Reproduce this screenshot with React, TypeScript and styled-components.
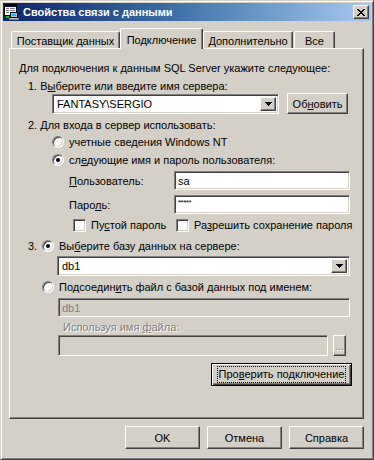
import React from 'react';
import styled, { createGlobalStyle, css } from 'styled-components';

//----------------------------------------- Global -----------------------------------------//
const GlobalStyle = createGlobalStyle`
  html, body { margin: 0; padding: 0; background: #d4d0c8; }
  * { box-sizing: border-box; }
`;

//----------------------------------------- Bevels -----------------------------------------//
const raised = css`
  border: 1px solid;
  border-color: #ffffff #404040 #404040 #ffffff;
  box-shadow: inset -1px -1px #808080, inset 1px 1px #d4d0c8;
`;

const sunken = css`
  border: 1px solid;
  border-color: #808080 #ffffff #ffffff #808080;
  box-shadow: inset 1px 1px #404040, inset -1px -1px #d4d0c8;
`;

//----------------------------------------- Icons -----------------------------------------//
const DataLinkIcon = () => (
  <svg width="16" height="16" viewBox="0 0 16 16" shapeRendering="crispEdges">
    <rect x="0.5" y="0.5" width="12" height="11" fill="#ffffff" stroke="#000000" />
    <rect x="1" y="1" width="11" height="2" fill="#000080" />
    <rect x="2" y="4" width="3" height="1" fill="#808080" />
    <rect x="6" y="4" width="5" height="1" fill="#808080" />
    <rect x="2" y="6" width="3" height="1" fill="#808080" />
    <rect x="6" y="6" width="5" height="1" fill="#808080" />
    <rect x="2" y="8" width="3" height="1" fill="#808080" />
    <rect x="6.5" y="8.5" width="7" height="5" fill="#c0c0c0" stroke="#000000" />
    <rect x="8" y="10" width="4" height="2" fill="#00c0ff" />
    <rect x="5" y="14" width="10" height="2" fill="#808080" />
    <rect x="6" y="14" width="8" height="1" fill="#c0c0c0" />
    <rect x="2" y="12" width="3" height="2" fill="#00c000" />
  </svg>
);

const xPixels = [
  [0, 0], [1, 0], [6, 0], [7, 0],
  [1, 1], [2, 1], [5, 1], [6, 1],
  [2, 2], [3, 2], [4, 2], [5, 2],
  [3, 3], [4, 3],
  [2, 4], [3, 4], [4, 4], [5, 4],
  [1, 5], [2, 5], [5, 5], [6, 5],
  [0, 6], [1, 6], [6, 6], [7, 6],
];

const CloseGlyph = () => (
  <svg width="8" height="7" viewBox="0 0 8 7" shapeRendering="crispEdges">
    {xPixels.map(([x, y]) => <rect key={`${x}-${y}`} x={x} y={y} width="1" height="1" fill="#000" />)}
  </svg>
);

const DownGlyph = () => (
  <svg width="7" height="4" viewBox="0 0 7 4" shapeRendering="crispEdges">
    <rect x="0" y="0" width="7" height="1" fill="#000" />
    <rect x="1" y="1" width="5" height="1" fill="#000" />
    <rect x="2" y="2" width="3" height="1" fill="#000" />
    <rect x="3" y="3" width="1" height="1" fill="#000" />
  </svg>
);

//----------------------------------------- Component -----------------------------------------//
const App: React.FC = () => {
  return (
    <>
      <GlobalStyle />
      <Window>
        <TitleBar>
          <TitleIcon><DataLinkIcon /></TitleIcon>
          <TitleText>Свойства связи с данными</TitleText>
          <CloseButton><CloseGlyph /></CloseButton>
        </TitleBar>

        <TabStrip>
          <Tab $w={109}>Поставщик данных</Tab>
          <Tab $w={83} $active>Подключение</Tab>
          <Tab $w={90}>Дополнительно</Tab>
          <Tab $w={41} $gap={1}>Все</Tab>
        </TabStrip>

        <Panel>
          <Line $mt={12}>Для подключения к данным SQL Server укажите следующее:</Line>
          <Line $mt={4} $ml={9}>1. В<Mn>ы</Mn>берите или введите имя сервера:</Line>
          <Line $mt={0} $ml={33} $h={21}>
            <Combo $w={227}>
              <ComboText>FANTASY\SERGIO</ComboText>
              <ComboArrow><DownGlyph /></ComboArrow>
            </Combo>
            <Button $w={61} $h={21} $ml={8}>Об<Mn>н</Mn>овить</Button>
          </Line>

          <Line $mt={4} $ml={9}>2. Для входа в сервер использовать:</Line>
          <Line $mt={2} $ml={33} $h={15}>
            <Radio />
            <Text>учетные сведения Windows NT</Text>
          </Line>
          <Line $mt={3} $ml={33} $h={15}>
            <Radio $checked />
            <Text>сл<Mn>е</Mn>дующие имя и пароль пользователя:</Text>
          </Line>
          <Line $mt={4} $ml={50} $h={19}>
            <FieldLabel><Mn>П</Mn>ользователь:</FieldLabel>
            <Field $w={176}>sa</Field>
          </Line>
          <Line $mt={5} $ml={50} $h={19}>
            <FieldLabel>Паро<Mn>л</Mn>ь:</FieldLabel>
            <Field $w={176}><Stars>*****</Stars></Field>
          </Line>
          <Line $mt={4} $ml={54} $h={14}>
            <Check />
            <Text $w={85}>Пу<Mn>с</Mn>той пароль</Text>
            <Check />
            <Text>Ра<Mn>з</Mn>решить сохранение пароля</Text>
          </Line>

          <Line $mt={7} $ml={9} $h={14}>
            <StepNum>3.</StepNum>
            <Radio $checked />
            <Text>Вы<Mn>б</Mn>ерите базу данных на сервере:</Text>
          </Line>
          <Line $mt={2} $ml={38} $h={21}>
            <Combo $w={293}>
              <ComboText>db1</ComboText>
              <ComboArrow><DownGlyph /></ComboArrow>
            </Combo>
          </Line>
          <Line $mt={3} $ml={23} $h={15}>
            <Radio />
            <Text>Подсоедин<Mn>и</Mn>ть файл с базой данных под именем:</Text>
          </Line>
          <Line $mt={4} $ml={39} $h={19}>
            <Field $w={292} $disabled>db1</Field>
          </Line>
          <Line $mt={3} $ml={39} $h={14}>
            <Text $disabled>Используя имя <Mn>ф</Mn>айла:</Text>
          </Line>
          <Line $mt={1} $ml={39} $h={21}>
            <Field $w={270} $disabled />
            <Button $w={13} $h={21} $ml={5} $disabled>...</Button>
          </Line>
          <Line $mt={7} $ml={192} $h={23}>
            <Button $w={141} $h={23} $default>
              <Focus>Про<Mn>в</Mn>ерить подключение</Focus>
            </Button>
          </Line>
        </Panel>

        <Footer>
          <Button $w={75} $h={23}>OK</Button>
          <Button $w={75} $h={23}>Отмена</Button>
          <Button $w={75} $h={23}>Справка</Button>
        </Footer>
      </Window>
    </>
  );
};

export default App;

//----------------------------------------- Style -----------------------------------------//
const Window = styled.div`
  width: 374px;
  height: 460px;
  display: flex;
  flex-direction: column;
  background: #d4d0c8;
  border: 1px solid;
  border-color: #d4d0c8 #404040 #404040 #d4d0c8;
  box-shadow: inset 1px 1px #ffffff, inset -1px -1px #808080;
  padding: 2px;
  font-family: "Liberation Sans", Arial, sans-serif;
  font-size: 11px;
  color: #000000;
`;

const TitleBar = styled.div`
  height: 18px;
  display: flex;
  align-items: center;
  padding: 0 2px 0 1px;
  background: linear-gradient(to right, #0a246a 0%, #3a6ea5 45%, #a6caf0 100%);
`;

const TitleIcon = styled.div`
  width: 16px;
  height: 16px;
  display: flex;
`;

const TitleText = styled.div`
  flex: 1;
  margin-left: 3px;
  color: #ffffff;
  font-weight: bold;
  font-size: 11px;
  white-space: nowrap;
`;

const CloseButton = styled.div`
  ${raised};
  width: 16px;
  height: 14px;
  background: #d4d0c8;
  display: flex;
  align-items: center;
  justify-content: center;
`;

const TabStrip = styled.div`
  height: 20px;
  margin: 7px 0 0 8px;
  display: flex;
  align-items: flex-end;
  position: relative;
  z-index: 1;
`;

const Tab = styled.div<{ $w: number; $active?: boolean; $gap?: number }>`
  width: ${p => p.$w}px;
  height: ${p => (p.$active ? 21 : 17)}px;
  margin-left: ${p => p.$gap ?? 0}px;
  margin-bottom: ${p => (p.$active ? -1 : 0)}px;
  padding-top: ${p => (p.$active ? 2 : 1)}px;
  background: #d4d0c8;
  border-top: 1px solid #ffffff;
  border-left: 1px solid #ffffff;
  border-right: 1px solid #404040;
  border-top-left-radius: 2px;
  border-top-right-radius: 2px;
  box-shadow: inset -1px 0 #808080;
  display: flex;
  align-items: center;
  justify-content: center;
  white-space: nowrap;
`;

const Panel = styled.div`
  height: 371px;
  margin: 0 7px 0 6px;
  display: flex;
  flex-direction: column;
  padding-left: 9px;
  border: 1px solid;
  border-color: #ffffff #404040 #404040 #ffffff;
  box-shadow: inset -1px -1px #808080;
`;

const Line = styled.div<{ $mt: number; $ml?: number; $h?: number }>`
  height: ${p => p.$h ?? 14}px;
  margin-top: ${p => p.$mt}px;
  margin-left: ${p => p.$ml ?? 0}px;
  display: flex;
  align-items: center;
  white-space: nowrap;
`;

const Mn = styled.span`
  text-decoration: underline;
  text-underline-offset: 1px;
`;

const Text = styled.span<{ $w?: number; $disabled?: boolean }>`
  ${p => (p.$w ? `width: ${p.$w}px;` : '')}
  margin-left: 5px;
  color: ${p => (p.$disabled ? '#808080' : '#000000')};
  text-shadow: ${p => (p.$disabled ? '1px 1px #ffffff' : 'none')};
`;

const StepNum = styled.span`
  width: 14px;
`;

const FieldLabel = styled.span`
  width: 105px;
`;

const Field = styled.div<{ $w: number; $disabled?: boolean }>`
  ${sunken};
  width: ${p => p.$w}px;
  height: 100%;
  padding: 0 3px;
  display: flex;
  align-items: center;
  background: ${p => (p.$disabled ? '#d4d0c8' : '#ffffff')};
  color: ${p => (p.$disabled ? '#808080' : '#000000')};
`;

const Stars = styled.span`
  font-size: 8px;
  letter-spacing: -0.5px;
  margin-top: -4px;
`;

const Combo = styled.div<{ $w: number }>`
  ${sunken};
  width: ${p => p.$w}px;
  height: 20px;
  background: #ffffff;
  display: flex;
  align-items: center;
  padding: 2px;
`;

const ComboText = styled.span`
  flex: 1;
  padding-left: 2px;
`;

const ComboArrow = styled.div`
  ${raised};
  width: 16px;
  height: 100%;
  background: #d4d0c8;
  display: flex;
  align-items: center;
  justify-content: center;
`;

const Button = styled.div<{ $w: number; $h: number; $ml?: number; $default?: boolean; $disabled?: boolean }>`
  ${raised};
  width: ${p => p.$w}px;
  height: ${p => p.$h}px;
  margin-left: ${p => p.$ml ?? 0}px;
  background: #d4d0c8;
  display: flex;
  align-items: center;
  justify-content: center;
  color: ${p => (p.$disabled ? '#808080' : '#000000')};
  text-shadow: ${p => (p.$disabled ? '1px 1px #ffffff' : 'none')};
  ${p => p.$default && css`
    border: 1px solid #000000;
    box-shadow: inset 1px 1px #ffffff, inset -1px -1px #404040, inset -2px -2px #808080;
  `}
`;

const Focus = styled.span`
  border: 1px dotted #000000;
  padding: 1px 1px;
  line-height: 13px;
`;

const Radio = styled.span<{ $checked?: boolean }>`
  width: 12px;
  height: 12px;
  flex: none;
  border-radius: 50%;
  border: 1px solid;
  border-color: #808080 #ffffff #ffffff #808080;
  box-shadow: inset 1px 1px #404040, inset -1px -1px #d4d0c8;
  background: #ffffff;
  display: flex;
  align-items: center;
  justify-content: center;
  &::after {
    content: '';
    width: 4px;
    height: 4px;
    border-radius: 50%;
    background: ${p => (p.$checked ? '#000000' : 'transparent')};
  }
`;

const Check = styled.span`
  ${sunken};
  width: 13px;
  height: 13px;
  flex: none;
  background: #ffffff;
`;

const Footer = styled.div`
  display: flex;
  justify-content: flex-end;
  gap: 7px;
  margin: 7px 7px 0 0;
`;
